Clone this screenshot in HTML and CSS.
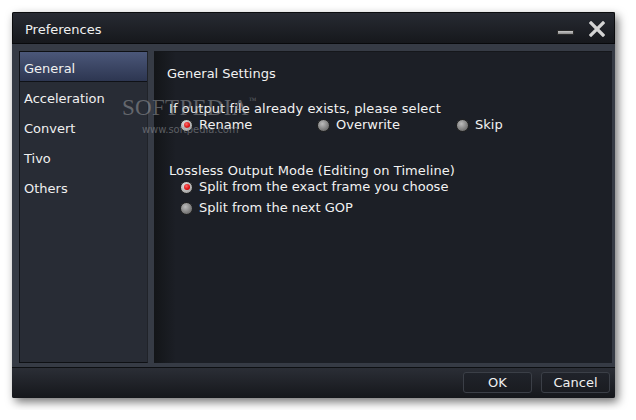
FILE: index.html
```html
<!DOCTYPE html>
<html>
<head>
<meta charset="utf-8">
<link rel="stylesheet" href="styles.css">
</head>
<body>
<div class="window">
  <div class="titlebar">
    <span class="title">Preferences</span>
    <div class="controls">
      <span class="min"></span>
      <svg class="close" width="16" height="16" viewBox="0 0 16 16"><path d="M2 2 L14 14 M14 2 L2 14" stroke="#d4d4d4" stroke-width="3.2" stroke-linecap="square"/></svg>
    </div>
  </div>
  <div class="frame">
    <div class="sidebar">
      <div class="nav-item active">General</div>
      <div class="nav-item">Acceleration</div>
      <div class="nav-item">Convert</div>
      <div class="nav-item">Tivo</div>
      <div class="nav-item">Others</div>
    </div>
    <div class="content">
      <div class="heading">General Settings</div>
      <div class="group first">
        <div class="label">If output file already exists, please select</div>
        <div class="radio-row">
          <div class="radio-opt"><span class="radio on"></span>Rename</div>
          <div class="radio-opt"><span class="radio"></span>Overwrite</div>
          <div class="radio-opt"><span class="radio"></span>Skip</div>
        </div>
      </div>
      <div class="group second">
        <div class="label">Lossless Output Mode (Editing on Timeline)</div>
        <div class="radio-col">
          <div class="radio-opt"><span class="radio on"></span>Split from the exact frame you choose</div>
          <div class="radio-opt"><span class="radio"></span>Split from the next GOP</div>
        </div>
      </div>
    </div>
    <div class="watermark"><span class="wm-big">SOFTPEDIA<sup>™</sup></span><span class="wm-small">www.softpedia.com</span></div>
  </div>
  <div class="footer">
    <button class="btn">OK</button>
    <button class="btn">Cancel</button>
  </div>
</div>
</body>
</html>
```
FILE: styles.css
```css
html, body {
  margin: 0;
  padding: 0;
  background: #ffffff;
}
body {
  padding: 12px;
  font-family: "DejaVu Sans", Verdana, sans-serif;
  font-size: 13px;
  color: #f2f2f2;
}
.window {
  width: 603px;
  height: 386px;
  display: flex;
  flex-direction: column;
  box-shadow: 3px 4px 10px rgba(0, 0, 0, 0.55);
  border-radius: 2px;
  background: #363b45;
  position: relative;
}
.titlebar {
  height: 32px;
  box-sizing: border-box;
  display: flex;
  align-items: center;
  justify-content: space-between;
  padding: 0 9px 0 12px;
  background: linear-gradient(#272a32, #16181c);
  border: 1px solid #0b0c0e;
  border-bottom: 1px solid #08090b;
  border-radius: 2px 2px 0 0;
}
.title {
  font-size: 13px;
  color: #f0f0f0;
  padding-top: 2px;
}
.controls {
  display: flex;
  align-items: center;
  gap: 15px;
}
.min {
  width: 15px;
  height: 3px;
  border: 1px solid #2a2a2a;
  background: linear-gradient(#c8c8c8, #8a8a8a);
  margin-top: 9px;
}
.close {
  display: block;
  margin-top: 1px;
}
.frame {
  flex: 1;
  display: flex;
  gap: 6px;
  padding: 7px 3px 4px 7px;
  background: #363b45;
  position: relative;
}
.sidebar {
  width: 127px;
  background: #282c35;
  border: 1px solid #0e1014;
  border-right-color: #202329;
}
.nav-item {
  height: 30px;
  box-sizing: border-box;
  display: flex;
  align-items: center;
  padding: 3px 0 0 4px;
  color: #f0f0f0;
}
.nav-item.active {
  background: linear-gradient(#4b5779, #2d3651);
  border-bottom: 1px solid #0f1116;
}
.content {
  flex: 1;
  background: linear-gradient(90deg, #131518 0, #1c1f26 22px, #1c1f26 100%);
  border-top: 1px solid #15171b;
  padding: 14px 13px;
}
.heading {
  line-height: 16px;
}
.label {
  line-height: 16px;
  margin-left: 2px;
  letter-spacing: 0.1px;
}
.group.first {
  margin-top: 19px;
}
.group.second {
  margin-top: 30px;
}
.radio-row {
  display: grid;
  grid-template-columns: 137px 139px auto;
  margin-left: 13px;
  margin-top: 0;
}
.radio-col {
  margin-left: 13px;
  display: flex;
  flex-direction: column;
  gap: 5px;
}
.radio-opt {
  display: flex;
  align-items: center;
  line-height: 16px;
}
.radio {
  width: 11px;
  height: 11px;
  border-radius: 50%;
  border: 1px solid #222;
  background: radial-gradient(circle at 40% 35%, #bcbcbc 0, #828282 55%, #555 100%);
  margin-right: 6px;
  position: relative;
  flex: none;
}
.radio.on {
  background: radial-gradient(circle at 40% 35%, #e6e6e6 0, #b0b0b0 60%, #8a8a8a 100%);
}
.radio.on::after {
  content: "";
  position: absolute;
  left: 2.5px;
  top: 2.5px;
  width: 6px;
  height: 6px;
  border-radius: 50%;
  background: radial-gradient(circle at 40% 35%, #ff6a6a, #d40000 70%, #9a0000);
}
.watermark {
  position: absolute;
  left: 110px;
  top: 53px;
  display: flex;
  flex-direction: column;
  align-items: flex-start;
  pointer-events: none;
}
.wm-big {
  font-family: "Liberation Serif", "Times New Roman", serif;
  font-size: 23px;
  letter-spacing: 0.3px;
  color: rgba(160, 162, 166, 0.5);
  line-height: 22px;
}
.wm-big sup {
  font-size: 8px;
  vertical-align: top;
  line-height: 8px;
}
.wm-small {
  font-family: "Liberation Sans Narrow", "DejaVu Sans Condensed", sans-serif;
  font-size: 11px;
  color: rgba(160, 162, 166, 0.5);
  margin-top: 5px;
  margin-left: 20px;
  line-height: 12px;
}
.footer {
  height: 31px;
  box-sizing: border-box;
  display: flex;
  justify-content: flex-end;
  align-items: center;
  gap: 9px;
  padding: 0 5px 2px 0;
  background: linear-gradient(#2b2e36, #15171b);
  border-top: 1px solid #0d0f12;
  border-radius: 0 0 2px 2px;
}
.btn {
  width: 69px;
  height: 21px;
  border: 1px solid #3b3f47;
  border-radius: 3px;
  background: linear-gradient(#20232a, #1a1c21);
  color: #f0f0f0;
  font-family: "DejaVu Sans", Verdana, sans-serif;
  font-size: 13px;
  padding: 0;
  margin-top: 0;
}
```
